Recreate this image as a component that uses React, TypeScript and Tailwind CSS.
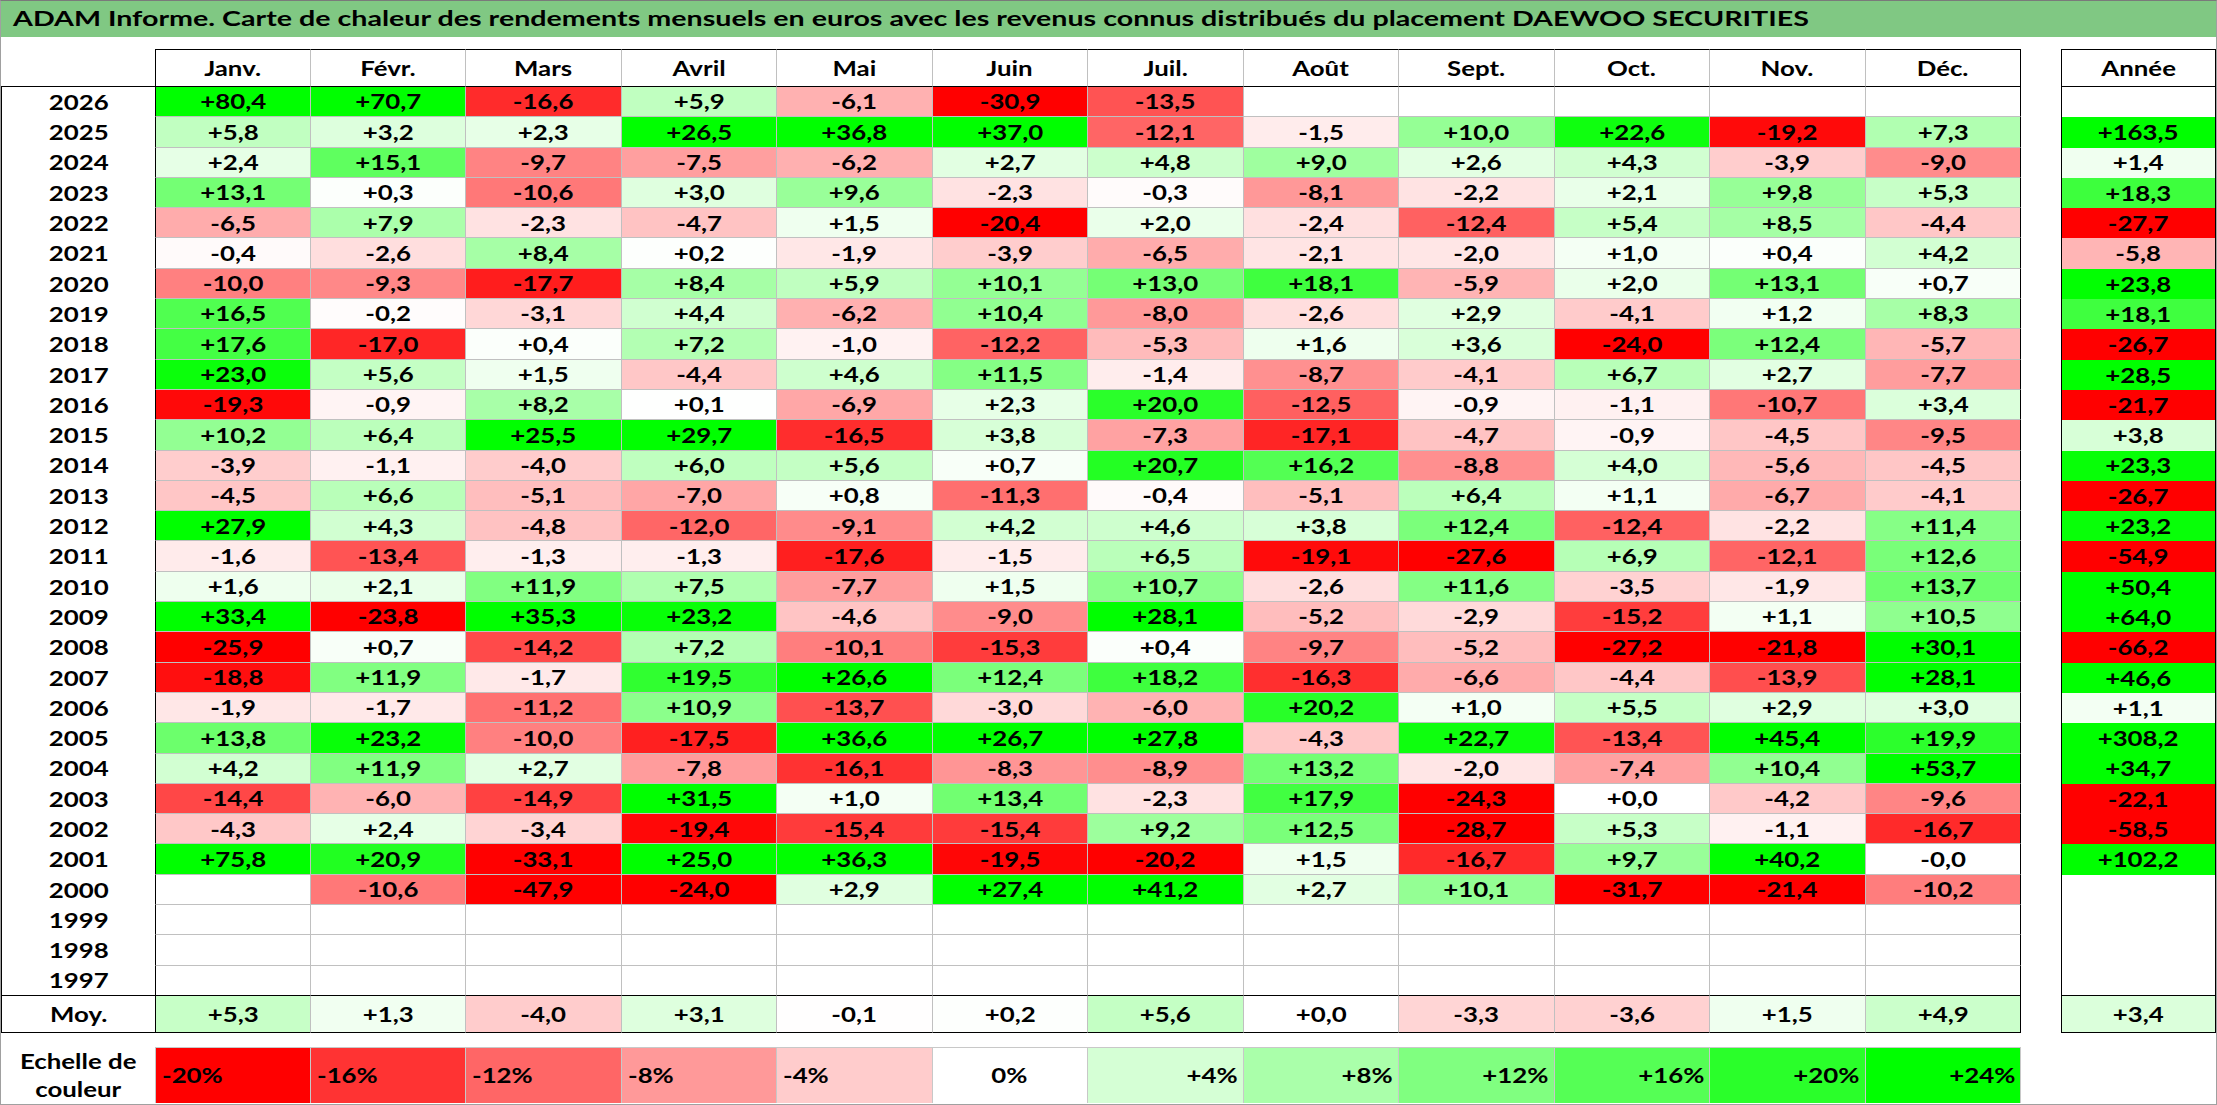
import React from "react";

const MONTHS = [
  "Janv.",
  "Févr.",
  "Mars",
  "Avril",
  "Mai",
  "Juin",
  "Juil.",
  "Août",
  "Sept.",
  "Oct.",
  "Nov.",
  "Déc.",
];

// "." = empty cell
const RAW: [string, string, string][] = [
  ["2026", "+80,4 +70,7 -16,6 +5,9 -6,1 -30,9 -13,5 . . . . .", "."],
  ["2025", "+5,8 +3,2 +2,3 +26,5 +36,8 +37,0 -12,1 -1,5 +10,0 +22,6 -19,2 +7,3", "+163,5"],
  ["2024", "+2,4 +15,1 -9,7 -7,5 -6,2 +2,7 +4,8 +9,0 +2,6 +4,3 -3,9 -9,0", "+1,4"],
  ["2023", "+13,1 +0,3 -10,6 +3,0 +9,6 -2,3 -0,3 -8,1 -2,2 +2,1 +9,8 +5,3", "+18,3"],
  ["2022", "-6,5 +7,9 -2,3 -4,7 +1,5 -20,4 +2,0 -2,4 -12,4 +5,4 +8,5 -4,4", "-27,7"],
  ["2021", "-0,4 -2,6 +8,4 +0,2 -1,9 -3,9 -6,5 -2,1 -2,0 +1,0 +0,4 +4,2", "-5,8"],
  ["2020", "-10,0 -9,3 -17,7 +8,4 +5,9 +10,1 +13,0 +18,1 -5,9 +2,0 +13,1 +0,7", "+23,8"],
  ["2019", "+16,5 -0,2 -3,1 +4,4 -6,2 +10,4 -8,0 -2,6 +2,9 -4,1 +1,2 +8,3", "+18,1"],
  ["2018", "+17,6 -17,0 +0,4 +7,2 -1,0 -12,2 -5,3 +1,6 +3,6 -24,0 +12,4 -5,7", "-26,7"],
  ["2017", "+23,0 +5,6 +1,5 -4,4 +4,6 +11,5 -1,4 -8,7 -4,1 +6,7 +2,7 -7,7", "+28,5"],
  ["2016", "-19,3 -0,9 +8,2 +0,1 -6,9 +2,3 +20,0 -12,5 -0,9 -1,1 -10,7 +3,4", "-21,7"],
  ["2015", "+10,2 +6,4 +25,5 +29,7 -16,5 +3,8 -7,3 -17,1 -4,7 -0,9 -4,5 -9,5", "+3,8"],
  ["2014", "-3,9 -1,1 -4,0 +6,0 +5,6 +0,7 +20,7 +16,2 -8,8 +4,0 -5,6 -4,5", "+23,3"],
  ["2013", "-4,5 +6,6 -5,1 -7,0 +0,8 -11,3 -0,4 -5,1 +6,4 +1,1 -6,7 -4,1", "-26,7"],
  ["2012", "+27,9 +4,3 -4,8 -12,0 -9,1 +4,2 +4,6 +3,8 +12,4 -12,4 -2,2 +11,4", "+23,2"],
  ["2011", "-1,6 -13,4 -1,3 -1,3 -17,6 -1,5 +6,5 -19,1 -27,6 +6,9 -12,1 +12,6", "-54,9"],
  ["2010", "+1,6 +2,1 +11,9 +7,5 -7,7 +1,5 +10,7 -2,6 +11,6 -3,5 -1,9 +13,7", "+50,4"],
  ["2009", "+33,4 -23,8 +35,3 +23,2 -4,6 -9,0 +28,1 -5,2 -2,9 -15,2 +1,1 +10,5", "+64,0"],
  ["2008", "-25,9 +0,7 -14,2 +7,2 -10,1 -15,3 +0,4 -9,7 -5,2 -27,2 -21,8 +30,1", "-66,2"],
  ["2007", "-18,8 +11,9 -1,7 +19,5 +26,6 +12,4 +18,2 -16,3 -6,6 -4,4 -13,9 +28,1", "+46,6"],
  ["2006", "-1,9 -1,7 -11,2 +10,9 -13,7 -3,0 -6,0 +20,2 +1,0 +5,5 +2,9 +3,0", "+1,1"],
  ["2005", "+13,8 +23,2 -10,0 -17,5 +36,6 +26,7 +27,8 -4,3 +22,7 -13,4 +45,4 +19,9", "+308,2"],
  ["2004", "+4,2 +11,9 +2,7 -7,8 -16,1 -8,3 -8,9 +13,2 -2,0 -7,4 +10,4 +53,7", "+34,7"],
  ["2003", "-14,4 -6,0 -14,9 +31,5 +1,0 +13,4 -2,3 +17,9 -24,3 +0,0 -4,2 -9,6", "-22,1"],
  ["2002", "-4,3 +2,4 -3,4 -19,4 -15,4 -15,4 +9,2 +12,5 -28,7 +5,3 -1,1 -16,7", "-58,5"],
  ["2001", "+75,8 +20,9 -33,1 +25,0 +36,3 -19,5 -20,2 +1,5 -16,7 +9,7 +40,2 -0,0", "+102,2"],
  ["2000", ". -10,6 -47,9 -24,0 +2,9 +27,4 +41,2 +2,7 +10,1 -31,7 -21,4 -10,2", "."],
  ["1999", ". . . . . . . . . . . .", "."],
  ["1998", ". . . . . . . . . . . .", "."],
  ["1997", ". . . . . . . . . . . .", "."],
];

const AVG = "+5,3 +1,3 -4,0 +3,1 -0,1 +0,2 +5,6 +0,0 -3,3 -3,6 +1,5 +4,9".split(" ");
const AVG_YEAR = "+3,4";

const ROWS = RAW.map(([year, months, total]) => ({
  year,
  months: months.split(" ").map((v) => (v === "." ? "" : v)),
  total: total === "." ? "" : total,
}));

const SCALE = [-20, -16, -12, -8, -4, 0, 4, 8, 12, 16, 20, 24];

// red at -20, white at 0, green at +24
function heat(value: string | number) {
  if (value === "") return "#ffffff";
  const n =
    typeof value === "number" ? value : parseFloat(value.replace(",", "."));
  if (!n) return "#ffffff";
  if (n < 0) {
    const c = Math.round(255 * (1 - Math.min(1, -n / 20)));
    return `rgb(255,${c},${c})`;
  }
  const c = Math.round(255 * (1 - Math.min(1, n / 24)));
  return `rgb(${c},255,${c})`;
}

// the sheet was captured stretched sideways, so glyphs are widened
function Wide({
  children,
  origin = "center",
}: {
  children: React.ReactNode;
  origin?: "center" | "left" | "right";
}) {
  const o =
    origin === "left"
      ? "origin-left"
      : origin === "right"
        ? "origin-right"
        : "origin-center";
  return (
    <span className={`inline-block whitespace-nowrap scale-x-[1.26] ${o}`}>
      {children}
    </span>
  );
}

function MonthCell({
  value,
  first,
  last,
  bottom,
}: {
  value: string;
  first: boolean;
  last: boolean;
  bottom: "gray" | "black";
}) {
  return (
    <div
      className={[
        "w-[155.5px] h-full flex items-center justify-center border-r border-b",
        first ? "border-l border-l-black" : "",
        last ? "border-r-black" : "border-r-[#c0c0c0]",
        bottom === "black" ? "border-b-black" : "border-b-[#c0c0c0]",
      ].join(" ")}
      style={{ backgroundColor: heat(value) }}
    >
      {value && <Wide>{value}</Wide>}
    </div>
  );
}

export default function App() {
  return (
    <div className="w-[2217px] h-[1105px] bg-white border border-[#a0a0a0] border-t-[#7a7a7a] flex flex-col text-black font-['Lato',sans-serif] font-bold text-[20.5px] leading-none overflow-hidden">
      <div className="h-[36px] shrink-0 bg-[#80c883] flex items-center pl-[12px] text-[21.7px]">
        <span className="inline-block whitespace-nowrap scale-x-[1.32] origin-left">
          ADAM Informe. Carte de chaleur des rendements mensuels en euros avec
          les revenus connus distribués du placement DAEWOO SECURITIES
        </span>
      </div>

      <div className="mt-[12px] flex">
        {/* monthly grid */}
        <div className="flex flex-col w-[2020px] shrink-0">
          <div className="flex h-[38px]">
            <div className="w-[154px] border-b border-b-black" />
            {MONTHS.map((m, i) => (
              <div
                key={m}
                className={[
                  "w-[155.5px] flex items-center justify-center border-t border-b border-r border-t-black border-b-black",
                  i === 0 ? "border-l border-l-black" : "",
                  i === 11 ? "border-r-black" : "border-r-[#c0c0c0]",
                ].join(" ")}
              >
                <Wide>{m}</Wide>
              </div>
            ))}
          </div>

          {ROWS.map((row, r) => {
            const lastRow = r === ROWS.length - 1;
            return (
              <div key={row.year} className="flex h-[30.3px]">
                <div
                  className={[
                    "w-[154px] flex items-center justify-center border-l border-l-black",
                    lastRow ? "border-b border-b-black" : "",
                  ].join(" ")}
                >
                  <Wide>{row.year}</Wide>
                </div>
                {row.months.map((v, i) => (
                  <MonthCell
                    key={i}
                    value={v}
                    first={i === 0}
                    last={i === 11}
                    bottom={lastRow ? "black" : "gray"}
                  />
                ))}
              </div>
            );
          })}

          <div className="flex h-[37px]">
            <div className="w-[154px] flex items-center justify-center border-l border-b border-l-black border-b-black">
              <Wide>Moy.</Wide>
            </div>
            {AVG.map((v, i) => (
              <MonthCell
                key={i}
                value={v}
                first={i === 0}
                last={i === 11}
                bottom="black"
              />
            ))}
          </div>
        </div>

        {/* yearly column */}
        <div className="ml-[40px] w-[155px] shrink-0 flex flex-col border-l border-r border-black">
          <div className="h-[38px] flex items-center justify-center border-t border-b border-black">
            <Wide>Année</Wide>
          </div>
          {ROWS.map((row, r) => (
            <div
              key={row.year}
              className={[
                "h-[30.3px] flex items-center justify-center",
                r === ROWS.length - 1 ? "border-b border-b-black" : "",
              ].join(" ")}
              style={{ backgroundColor: heat(row.total) }}
            >
              {row.total && <Wide>{row.total}</Wide>}
            </div>
          ))}
          <div
            className="h-[37px] flex items-center justify-center border-b border-b-black"
            style={{ backgroundColor: heat(AVG_YEAR) }}
          >
            <Wide>{AVG_YEAR}</Wide>
          </div>
        </div>
      </div>

      {/* colour legend */}
      <div className="mt-[14px] flex h-[56px]">
        <div className="w-[154px] flex items-center justify-center text-center leading-[28px]">
          <span className="inline-block scale-x-[1.26] origin-center">
            Echelle de
            <br />
            couleur
          </span>
        </div>
        {SCALE.map((s, i) => (
          <div
            key={s}
            className={[
              "w-[155.5px] flex items-center border-t border-r border-[#c8c8c8]",
              i === 0 ? "border-l" : "",
              s < 0
                ? "justify-start pl-[6px]"
                : s === 0
                  ? "justify-center"
                  : "justify-end pr-[5px]",
            ].join(" ")}
            style={{ backgroundColor: heat(s) }}
          >
            <Wide origin={s < 0 ? "left" : s === 0 ? "center" : "right"}>
              {s > 0 ? `+${s}%` : `${s}%`}
            </Wide>
          </div>
        ))}
      </div>
    </div>
  );
}
